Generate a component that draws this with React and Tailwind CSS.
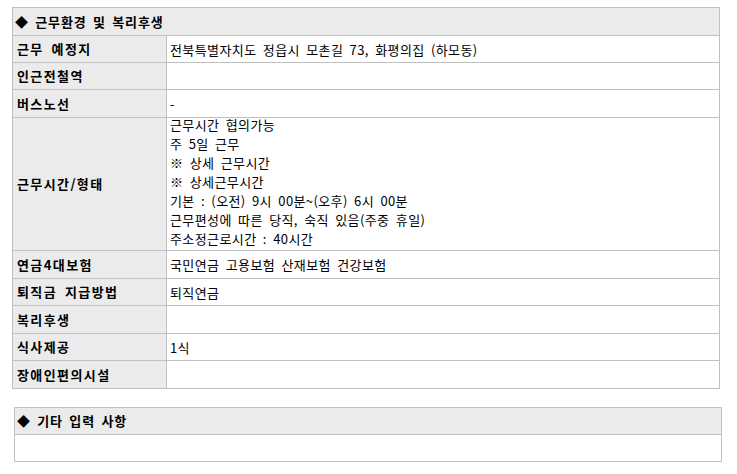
import React from "react";

const font = { fontFamily: '"Noto Sans CJK KR", "Noto Sans", sans-serif' };

const rows = [
  { label: "근무 예정지", value: ["전북특별자치도 정읍시 모촌길 73, 화평의집 (하모동)"], h: "h-[27px]" },
  { label: "인근전철역", value: [""], h: "h-[27px]" },
  { label: "버스노선", value: ["-"], h: "h-[28px]" },
  {
    label: "근무시간/형태",
    value: [
      "근무시간 협의가능",
      "주 5일 근무",
      "※ 상세 근무시간",
      "※ 상세근무시간",
      "기본 : (오전) 9시 00분~(오후) 6시 00분",
      "근무편성에 따른 당직, 숙직 있음(주중 휴일)",
      "주소정근로시간 : 40시간",
    ],
    h: "h-[133px]",
    tall: true,
  },
  { label: "연금4대보험", value: ["국민연금 고용보험 산재보험 건강보험"], h: "h-[28px]" },
  { label: "퇴직금 지급방법", value: ["퇴직연금"], h: "h-[27px]" },
  { label: "복리후생", value: [""], h: "h-[28px]" },
  { label: "식사제공", value: ["1식"], h: "h-[27px]" },
  { label: "장애인편의시설", value: [""], h: "h-[27px]" },
];

export default function App() {
  return (
    <div
      className="w-[737px] h-[474px] bg-white text-black text-[13px] tracking-[0.4px] [word-spacing:3px] pt-[7px]"
      style={font}
    >
      <div className="ml-[12px] w-[708px] border border-[#c0c0c0]">
        <div className="h-[28px] bg-[#ebebeb] border-b border-[#c0c0c0] flex items-center pl-[2px] font-bold tracking-[0.9px] [word-spacing:2.5px]">
          ◆ 근무환경 및 복리후생
        </div>
        {rows.map((r, i) => (
          <div
            key={i}
            className={`flex ${r.h} ${i < rows.length - 1 ? "border-b border-[#c0c0c0]" : ""}`}
          >
            <div className="w-[154px] shrink-0 bg-[#ebebeb] border-r border-[#c0c0c0] flex items-center pl-[4px] font-bold tracking-[1.4px] [word-spacing:3.5px]">
              {r.label}
            </div>
            <div
              className={`flex-1 flex flex-col justify-center pl-[3px] leading-[19px] ${r.tall ? "pb-[6px]" : ""}`}
            >
              {r.value.map((v, j) => (
                <div key={j}>{v}</div>
              ))}
            </div>
          </div>
        ))}
      </div>
      <div className="ml-[14px] mt-[18px] w-[708px] border border-[#c0c0c0]">
        <div className="h-[27px] bg-[#ebebeb] border-b border-[#c0c0c0] flex items-center pl-[2px] font-bold tracking-[0.9px] [word-spacing:2.5px]">
          ◆ 기타 입력 사항
        </div>
        <div className="h-[26px]"></div>
      </div>
    </div>
  );
}
